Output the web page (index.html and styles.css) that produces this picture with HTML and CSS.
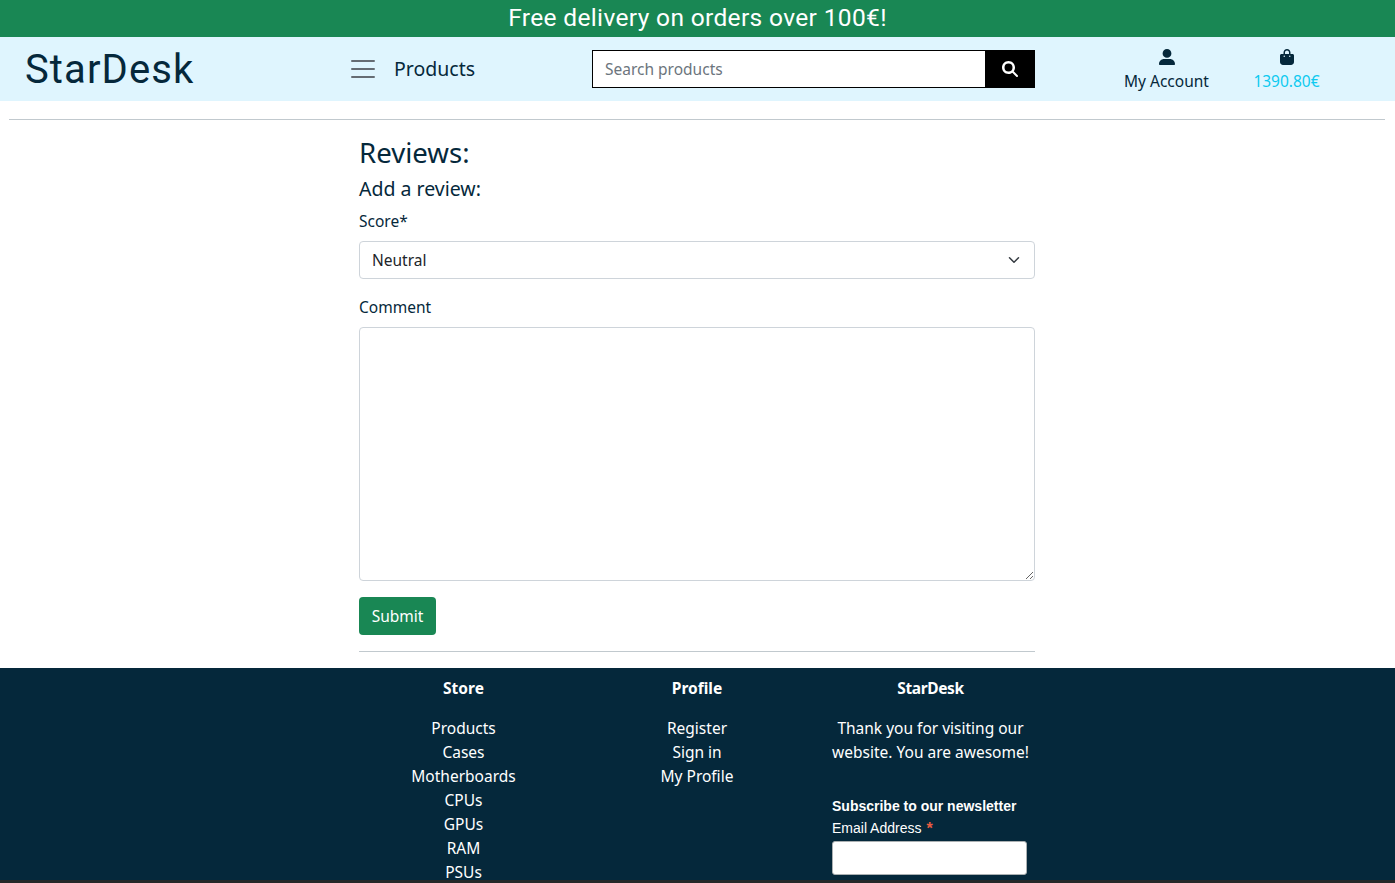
FILE: index.html
```html
<!DOCTYPE html>
<html lang="en">
<head>
<meta charset="utf-8">
<title>StarDesk</title>
<link rel="stylesheet" href="styles.css">
</head>
<body>
<div class="promo"><span class="promo-text">Free delivery on orders over 100€!</span></div>
<header class="navbar">
  <a class="brand">StarDesk</a>
  <a class="menu">
    <svg class="menu-icon" width="30" height="30" viewBox="0 0 30 30"><path d="M4 7h22M4 15h22M4 23h22" stroke="#656c73" stroke-width="2" stroke-linecap="round"/></svg>
    <span class="menu-label">Products</span>
  </a>
  <form class="search">
    <input class="search-input" type="text" placeholder="Search products">
    <button class="search-button" type="button" aria-label="Search">
      <svg width="16" height="16" viewBox="0 0 512 512"><path fill="#fff" d="M416 208c0 45.900-14.900 88.300-40 122.700L502.600 457.400c12.500 12.500 12.500 32.800 0 45.300s-32.800 12.500-45.300 0L330.700 376c-34.400 25.200-76.800 40-122.700 40C93.100 416 0 322.900 0 208S93.100 0 208 0S416 93.100 416 208zM208 336a128 128 0 1 0 0-256 128 128 0 1 0 0 256z"/></svg>
    </button>
  </form>
  <a class="nav-item account">
    <svg width="16" height="16" viewBox="0 0 16 16"><path fill="#05283b" d="M8 0a4.400 4.400 0 0 1 0 8.800A4.400 4.400 0 0 1 8 0zM5.200 9.900h5.600c3 0 5.200 2.100 5.200 5.100 0 .6-.4 1-1 1H1c-.6 0-1-.4-1-1 0-3 2.200-5.100 5.200-5.100z"/></svg>
    <span class="account-label">My Account</span>
  </a>
  <a class="nav-item cart">
    <svg width="16" height="16" viewBox="0 0 448 512"><path fill="#05283b" d="M112 112C112 50.100 162.100 0 224 0s112 50.100 112 112v48h64c26.500 0 48 21.500 48 48v208c0 53-43 96-96 96H96c-53 0-96-43-96-96V208c0-26.500 21.500-48 48-48h64v-48zm48 48h128v-48c0-35.300-28.700-64-64-64s-64 28.700-64 64v48zm-24 96a24 24 0 1 0 0-48 24 24 0 1 0 0 48zm200-24a24 24 0 1 0-48 0 24 24 0 1 0 48 0z"/></svg>
    <span class="cart-total">1390.80€</span>
  </a>
</header>
<hr class="rule top-rule">
<main class="reviews">
  <h2 class="title">Reviews:</h2>
  <h5 class="subtitle">Add a review:</h5>
  <label class="label">Score*</label>
  <div class="select"><span class="select-value">Neutral</span>
    <svg width="16" height="12" viewBox="0 0 16 16"><path d="M2 5l6 6 6-6" fill="none" stroke="#343a40" stroke-width="2" stroke-linecap="round" stroke-linejoin="round"/></svg>
  </div>
  <label class="label">Comment</label>
  <textarea class="textarea"></textarea>
  <button class="submit" type="button">Submit</button>
  <hr class="rule">
</main>
<footer class="footer">
  <div class="footer-grid">
    <section class="column">
      <p class="heading">Store</p>
      <ul class="links">
        <li>Products</li><li>Cases</li><li>Motherboards</li><li>CPUs</li><li>GPUs</li><li>RAM</li><li>PSUs</li>
      </ul>
    </section>
    <section class="column">
      <p class="heading">Profile</p>
      <ul class="links"><li>Register</li><li>Sign in</li><li>My Profile</li></ul>
    </section>
    <section class="column">
      <p class="heading brand-heading">StarDesk</p>
      <p class="thanks">Thank you for visiting our<br>website. You are awesome!</p>
      <form class="newsletter">
        <strong class="news-title">Subscribe to our newsletter</strong>
        <label class="news-label">Email Address <span class="required">*</span></label>
        <input class="news-input" type="email">
      </form>
    </section>
  </div>
</footer>
</body>
</html>
```
FILE: styles.css
```css
* { box-sizing: border-box; }
html, body { height: 100%; }
body {
  margin: 0;
  display: flex;
  flex-direction: column;
  overflow: hidden;
  background: #fff;
  color: #05283b;
  font: 15.5px/24px "Noto Sans", "Open Sans", sans-serif;
}
.promo {
  flex: none;
  height: 37px;
  background: #198754;
  color: #fff;
  text-align: center;
  font: 24.500px/36px Roboto, sans-serif;
  letter-spacing: 0.35px;
}
.navbar {
  flex: none;
  display: flex;
  align-items: center;
  height: 64px;
  background: #dff5fe;
}
.brand {
  width: 348px;
  padding-left: 25px;
  font: 40px/63px Roboto, sans-serif;
  letter-spacing: 1.1px;
}
.menu { display: flex; align-items: center; width: 244px; gap: 16px; font-size: 19.5px; }
.menu-icon { flex: none; }
.search { display: flex; width: 443px; height: 38px; }
.search-input {
  flex: 1;
  min-width: 0;
  padding: 0 12px;
  border: 1px solid #000;
  border-right: 0;
  border-radius: 0;
  background: #fff;
  font: inherit;
  outline: 0;
}
.search-input::placeholder { color: #6c757d; opacity: 1; }
.search-button {
  display: flex;
  align-items: center;
  justify-content: center;
  width: 50px;
  padding: 0;
  border: 0;
  background: #000;
}
.nav-item { display: flex; flex-direction: column; align-items: center; padding-top: 3px; gap: 4px; white-space: nowrap; }
.account { width: 120px; margin-left: 71.5px; }
.cart { width: 120px; }
.cart-total { color: #0dcaf0; }
.rule { flex: none; width: 100%; height: 1px; margin: 16px 0; border: 0; background: #c1c9ce; }
.top-rule { width: auto; margin: 18px 10px 15px 9px; }
.reviews { flex: none; display: flex; flex-direction: column; width: 676px; margin: 0 360px 0 359px; }
.title { margin: 0 0 8px; font-size: 27.600px; line-height: 34px; font-weight: 400; }
.subtitle { margin: 0 0 9px; font-size: 19.5px; line-height: 23px; font-weight: 400; }
.label { margin-bottom: 8px; }
.select {
  display: flex;
  align-items: center;
  justify-content: space-between;
  height: 38px;
  margin-bottom: 16px;
  padding: 0 12px;
  border: 1px solid #ced4da;
  border-radius: 4px;
  color: #212529;
}
.textarea { height: 254px; margin: 0 0 16px; border: 1px solid #ced4da; border-radius: 4px; resize: vertical; }
.submit {
  width: 77px;
  height: 38px;
  padding: 0;
  border: 0;
  border-radius: 4px;
  background: #198754;
  color: #fff;
  font: inherit;
}
.footer { flex: 1; min-height: 0; overflow: hidden; background: #05283b; color: #fff; border-bottom: 3px solid #252728; }
.footer-grid { display: grid; grid-template-columns: 209px 209px 209px; column-gap: 24.5px; width: 676px; margin: 0 360px 0 359px; padding-top: 8px; }
.column { text-align: center; white-space: nowrap; }
.heading { margin: 0 0 16px; font-weight: 700; }
.brand-heading { letter-spacing: -0.4px; }
.links { margin: 0; padding: 0; list-style: none; }
.thanks { margin: 0 0 31px; }
.newsletter { display: flex; flex-direction: column; align-items: flex-start; padding-left: 6px; font: 14px/22px "Liberation Sans", Arial, sans-serif; }
.required { color: #e85c41; font-size: 16px; font-weight: 700; line-height: 1; position: relative; top: 1px; left: 1px; }
.news-input { width: 195px; height: 34px; margin-top: 2px; border: 1px solid #abb0b2; border-radius: 3px; background: #fff; }
```
